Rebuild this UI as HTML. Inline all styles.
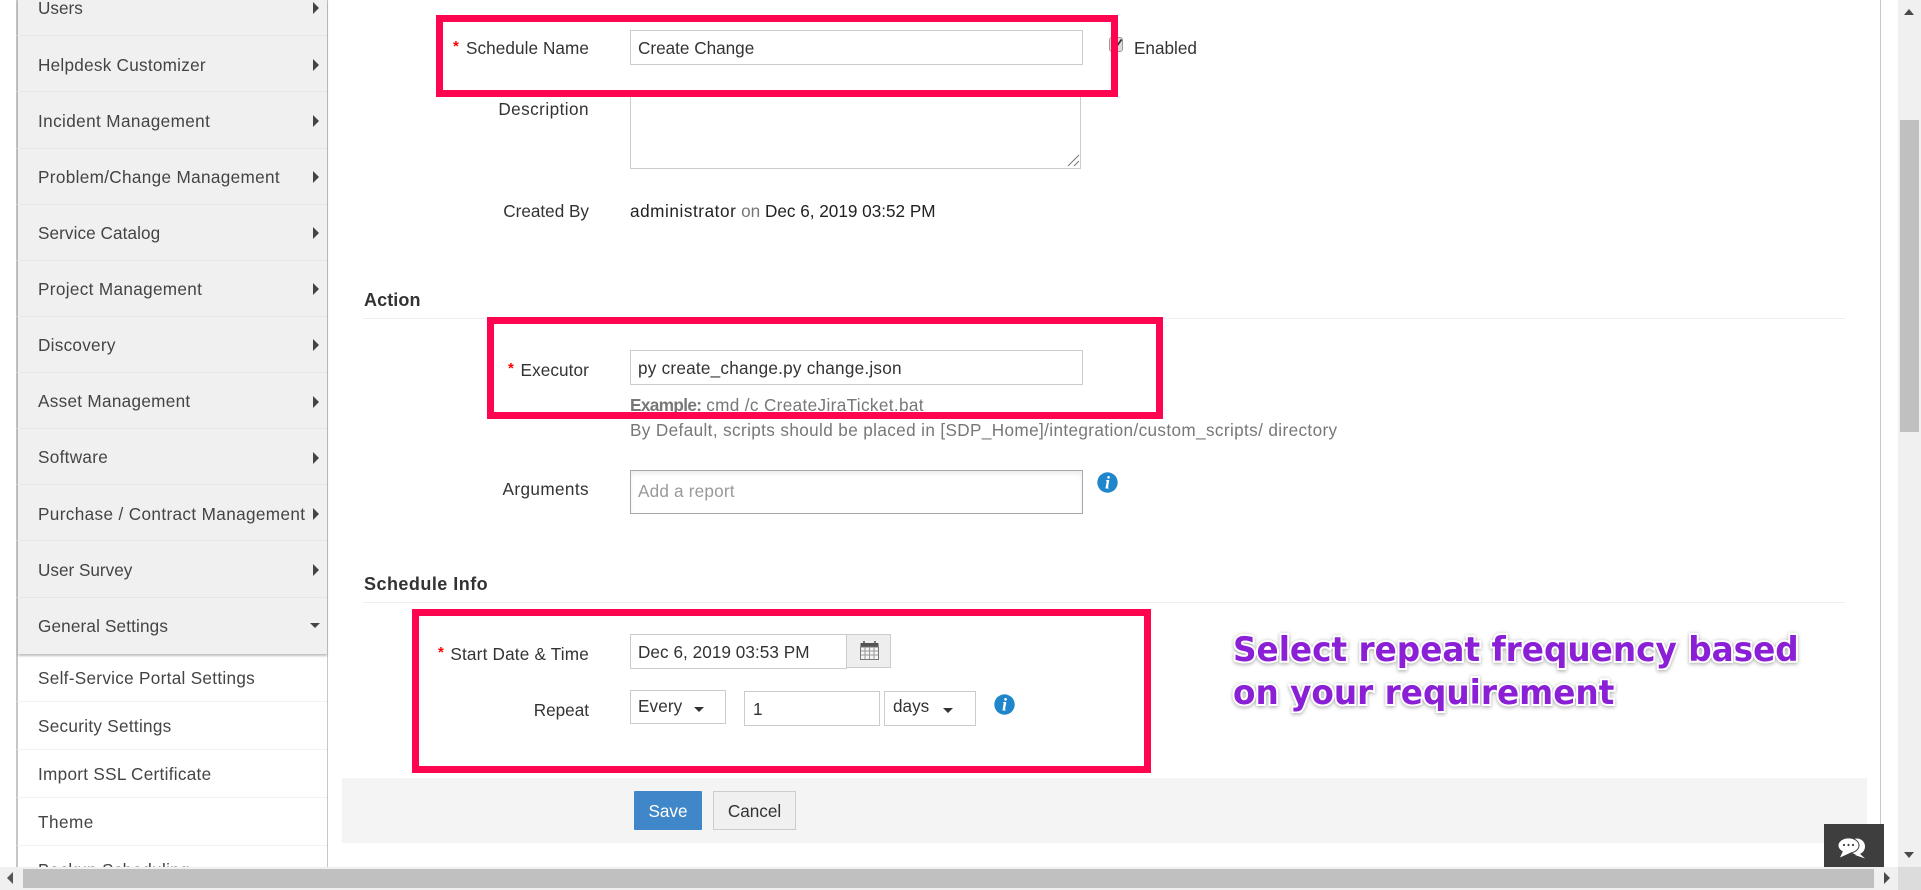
<!DOCTYPE html>
<html lang="en">
<head>
<meta charset="utf-8">
<title>Schedule</title>
<style>
html,body{margin:0;padding:0;width:1921px;height:890px;overflow:hidden;background:#fff}
body{position:relative;font-family:"Liberation Sans",Arial,sans-serif;font-size:17.15px;color:#333}
.a,.t,.l{position:absolute}
.t,.l{white-space:nowrap;line-height:20px}
.l{text-align:right;right:1332px}
.s{left:38px;color:#444}
.arr{position:absolute;left:312.5px;width:0;height:0;border-left:6px solid #444;border-top:6px solid transparent;border-bottom:6px solid transparent}
.sep{position:absolute;left:17px;width:310px;height:1px;background:#e6e6e6}
.box{position:absolute;box-sizing:border-box;background:#fff;border:1px solid #ccc}
.pink{position:absolute;box-sizing:border-box;border:7.4px solid #ff0550}
.req{color:#f00;font-size:15px;font-weight:bold;position:absolute}
.caret{position:absolute;width:0;height:0;border-top:5px solid #333;border-left:5.5px solid transparent;border-right:5.5px solid transparent}
.purple{position:absolute;white-space:nowrap;font-family:"DejaVu Sans",sans-serif;font-weight:bold;font-size:33.5px;line-height:40px;color:#8a1fd6;-webkit-text-stroke:4px #fff;paint-order:stroke fill;filter:drop-shadow(0 1px 2px rgba(0,0,0,.35));transform-origin:0 0;transform:scaleX(.976)}
</style>
</head>
<body>
<!-- sidebar -->
<div class="a" style="left:16px;top:0;width:312px;height:867px;box-sizing:border-box;border-left:2px solid #c6c6c6;border-right:1px solid #c6c6c6;background:#fff"></div>
<div class="a" style="left:18px;top:0;width:309px;height:654px;background:#f0f0f0;box-shadow:0 2px 2px rgba(0,0,0,.25)"></div>
<div class="sep" style="top:35px"></div><div class="sep" style="top:91px"></div><div class="sep" style="top:148px"></div><div class="sep" style="top:204px"></div><div class="sep" style="top:260px"></div><div class="sep" style="top:316px"></div><div class="sep" style="top:372px"></div><div class="sep" style="top:428px"></div><div class="sep" style="top:484px"></div><div class="sep" style="top:540px"></div><div class="sep" style="top:597px"></div>
<div class="sep" style="top:701px;background:#f2f2f2"></div><div class="sep" style="top:749px;background:#f2f2f2"></div><div class="sep" style="top:797px;background:#f2f2f2"></div><div class="sep" style="top:845px;background:#f2f2f2"></div>

<div class="t s" style="top:-2px">Users</div>
<div class="t s" style="top:55px;letter-spacing:.26px">Helpdesk Customizer</div>
<div class="t s" style="top:111px;letter-spacing:.39px">Incident Management</div>
<div class="t s" style="top:167px;letter-spacing:.34px">Problem/Change Management</div>
<div class="t s" style="top:223px;letter-spacing:.08px">Service Catalog</div>
<div class="t s" style="top:279px;letter-spacing:.34px">Project Management</div>
<div class="t s" style="top:335px;letter-spacing:.27px">Discovery</div>
<div class="t s" style="top:391px;letter-spacing:.3px">Asset Management</div>
<div class="t s" style="top:447px;letter-spacing:.3px">Software</div>
<div class="t s" style="top:504px;letter-spacing:.37px">Purchase / Contract Management</div>
<div class="t s" style="top:560px">User Survey</div>
<div class="t s" style="top:616px;letter-spacing:.15px">General Settings</div>
<div class="t s" style="top:668px;letter-spacing:.3px">Self-Service Portal Settings</div>
<div class="t s" style="top:716px;letter-spacing:.29px">Security Settings</div>
<div class="t s" style="top:764px;letter-spacing:.29px">Import SSL Certificate</div>
<div class="t s" style="top:812px;letter-spacing:.49px">Theme</div>
<div class="t s" style="top:860px;letter-spacing:.3px">Backup Scheduling</div>

<div class="arr" style="top:2px"></div><div class="arr" style="top:59px"></div><div class="arr" style="top:115px"></div><div class="arr" style="top:171px"></div><div class="arr" style="top:227px"></div><div class="arr" style="top:283px"></div><div class="arr" style="top:339px"></div><div class="arr" style="top:396px"></div><div class="arr" style="top:452px"></div><div class="arr" style="top:508px"></div><div class="arr" style="top:564px"></div>
<div class="caret" style="left:310px;top:623px;border-top-color:#444"></div>

<!-- form -->
<div class="l" style="top:38px;letter-spacing:.08px">Schedule Name</div><span class="req" style="left:453px;top:38px">*</span>
<div class="box" style="left:630px;top:30px;width:453px;height:35px"></div>
<div class="t" style="left:638px;top:38px">Create Change</div>
<div class="a" style="left:1109px;top:37px;width:14px;height:15px;box-sizing:border-box;border:1px solid #999;border-radius:3px;background:#ddd"></div>
<svg class="a" style="left:1115px;top:38px" width="8" height="8" viewBox="0 0 8 8"><path d="M1 4.5 L3 6.5 L6.5 1.5" stroke="#333" stroke-width="1.8" fill="none"/></svg>
<div class="t" style="left:1134px;top:38px">Enabled</div>

<div class="l" style="top:99px;letter-spacing:.45px">Description</div>
<div class="box" style="left:630px;top:92px;width:451px;height:77px"></div>
<svg class="a" style="left:1067px;top:154px" width="13" height="13" viewBox="0 0 13 13"><path d="M1 12 L12 1 M7 12 L12 7" stroke="#777" stroke-width="1" fill="none"/></svg>

<div class="l" style="top:201px">Created By</div>
<div class="t" style="left:630px;top:201px;color:#222"><span style="letter-spacing:.56px">administrator</span> <span style="color:#777">on</span> Dec 6, 2019 03:52 PM</div>

<div class="t" style="left:364px;top:290px;font-weight:bold;font-size:18px;color:#333;letter-spacing:.1px">Action</div>
<div class="a" style="left:363px;top:318px;width:1482px;height:1px;background:#eee"></div>

<div class="l" style="top:360px;letter-spacing:.1px">Executor</div><span class="req" style="left:508px;top:360px">*</span>
<div class="box" style="left:630px;top:350px;width:453px;height:35px"></div>
<div class="t" style="left:638px;top:358px;letter-spacing:.24px">py create_change.py change.json</div>
<div class="t" style="left:630px;top:395px;color:#777"><b style="letter-spacing:-.6px">Example:</b> <span style="letter-spacing:.36px">cmd /c CreateJiraTicket.bat</span></div>
<div class="t" style="left:630px;top:420px;color:#777;letter-spacing:.375px">By Default, scripts should be placed in [SDP_Home]/integration/custom_scripts/ directory</div>

<div class="l" style="top:479px;letter-spacing:.4px">Arguments</div>
<div class="box" style="left:630px;top:470px;width:453px;height:44px;border-color:#a8a8a8;box-shadow:inset 0 3px 4px rgba(0,0,0,.07)"></div>
<div class="t" style="left:638px;top:481px;color:#999;letter-spacing:.2px">Add a report</div>
<svg class="a" style="left:1097px;top:472px" width="21" height="21" viewBox="0 0 21 21"><circle cx="10.5" cy="10.5" r="10.2" fill="#1f86cc"/><text x="10.5" y="16.5" text-anchor="middle" font-family="Liberation Serif,serif" font-weight="bold" font-style="italic" font-size="18" fill="#fff">i</text></svg>

<div class="t" style="left:364px;top:574px;font-weight:bold;font-size:18px;color:#333;letter-spacing:.47px">Schedule Info</div>
<div class="a" style="left:363px;top:602px;width:1482px;height:1px;background:#eee"></div>

<div class="l" style="top:644px;letter-spacing:.2px">Start Date &amp; Time</div><span class="req" style="left:438px;top:644px">*</span>
<div class="box" style="left:630px;top:634px;width:217px;height:35px"></div>
<div class="t" style="left:638px;top:642px;letter-spacing:.05px">Dec 6, 2019 03:53 PM</div>
<div class="box" style="left:846px;top:634px;width:45px;height:34px;background:#eee"></div>
<svg class="a" style="left:860px;top:641px" width="19" height="20" viewBox="0 0 19 20"><rect x="3" y="0" width="2" height="4" fill="#777"/><rect x="14" y="0" width="2" height="4" fill="#777"/><rect x="0.5" y="2" width="18" height="4" fill="#555"/><rect x="0.5" y="6" width="18" height="12.5" fill="#f4f4f4" stroke="#777"/><path d="M5 6V18M9.5 6V18M14 6V18M1 10H18M1 14H18" stroke="#999" stroke-width="1" fill="none"/></svg>

<div class="l" style="top:700px">Repeat</div>
<div class="box" style="left:630px;top:690px;width:96px;height:34px"></div>
<div class="t" style="left:638px;top:696px;letter-spacing:.1px">Every</div>
<div class="caret" style="left:694px;top:707px"></div>
<div class="box" style="left:744px;top:691px;width:136px;height:35px"></div>
<div class="t" style="left:753px;top:699px">1</div>
<div class="box" style="left:884px;top:691px;width:92px;height:35px"></div>
<div class="t" style="left:893px;top:696px">days</div>
<div class="caret" style="left:943px;top:708px"></div>
<svg class="a" style="left:994px;top:694px" width="21" height="21" viewBox="0 0 21 21"><circle cx="10.5" cy="10.5" r="10.2" fill="#1f86cc"/><text x="10.5" y="16.5" text-anchor="middle" font-family="Liberation Serif,serif" font-weight="bold" font-style="italic" font-size="18" fill="#fff">i</text></svg>

<!-- footer -->
<div class="a" style="left:342px;top:778px;width:1525px;height:65px;background:#f4f4f4"></div>
<div class="a" style="left:634px;top:791px;width:68px;height:39px;background:#3f87c8;border-radius:1px"></div>
<div class="t" style="left:634px;top:801px;width:68px;text-align:center;color:#fff">Save</div>
<div class="box" style="left:713px;top:791px;width:83px;height:39px;background:#f0f0f0"></div>
<div class="t" style="left:713px;top:801px;width:83px;text-align:center">Cancel</div>

<!-- annotations -->
<div class="pink" style="left:436px;top:15px;width:682px;height:82px"></div>
<div class="pink" style="left:487px;top:317px;width:676px;height:102px"></div>
<div class="pink" style="left:412px;top:609px;width:739px;height:164px"></div>
<div class="purple" style="left:1233px;top:630px">Select repeat frequency based</div>
<div class="purple" style="left:1233px;top:673px">on your requirement</div>

<!-- right edge -->
<div class="a" style="left:1880px;top:0;width:1px;height:867px;background:#c8c8c8"></div>
<div class="a" style="left:1898px;top:0;width:23px;height:867px;background:#f0f0f0"></div>
<div class="a" style="left:1900px;top:120px;width:19px;height:312px;background:#c0c0c0"></div>
<div class="a" style="left:1904px;top:9px;width:0;height:0;border-left:5.5px solid transparent;border-right:5.5px solid transparent;border-bottom:6px solid #4a4a4a"></div>
<div class="a" style="left:1904px;top:852px;width:0;height:0;border-left:5.5px solid transparent;border-right:5.5px solid transparent;border-top:6px solid #4a4a4a"></div>

<!-- bottom scrollbar -->
<div class="a" style="left:0;top:867px;width:1921px;height:23px;background:#f0f0f0"></div>
<div class="a" style="left:23px;top:869px;width:1851px;height:19px;background:#c0c0c0"></div>
<div class="a" style="left:1898px;top:867px;width:23px;height:23px;background:#dcdcdc"></div>
<div class="a" style="left:7px;top:872px;width:0;height:0;border-top:6px solid transparent;border-bottom:6px solid transparent;border-right:6px solid #555"></div>
<div class="a" style="left:1884px;top:872px;width:0;height:0;border-top:6px solid transparent;border-bottom:6px solid transparent;border-left:6px solid #4a4a4a"></div>

<!-- chat -->
<div class="a" style="left:1824px;top:824px;width:60px;height:43px;background:#3e3e3e"></div>
<svg class="a" style="left:1837px;top:836px" width="30" height="24" viewBox="0 0 30 24"><ellipse cx="20" cy="10.5" rx="8" ry="8" fill="#fff"/><path d="M22 17 L28 22.5 L18 19Z" fill="#fff"/><ellipse cx="11.5" cy="9.5" rx="10.5" ry="7.6" fill="#fff" stroke="#3e3e3e" stroke-width="1"/><path d="M6 15 L3 21.5 L14 16.5Z" fill="#fff"/><circle cx="7" cy="9" r="1.1" fill="#3e3e3e"/><circle cx="11.5" cy="9" r="1.1" fill="#3e3e3e"/><circle cx="16" cy="9" r="1.1" fill="#3e3e3e"/></svg>
</body>
</html>
